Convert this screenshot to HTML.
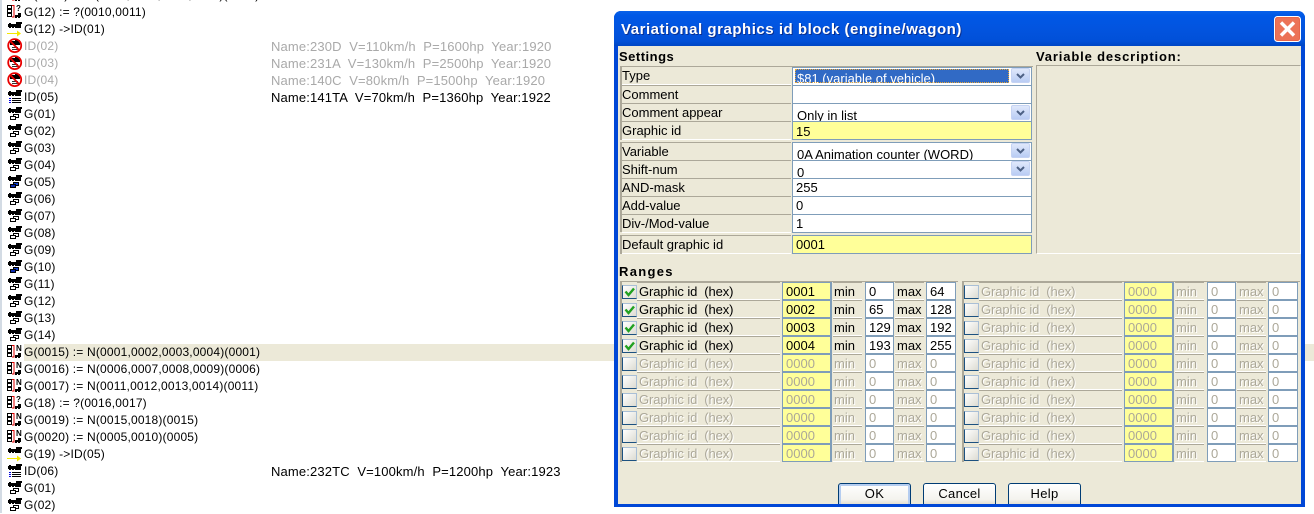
<!DOCTYPE html>
<html><head><meta charset="utf-8"><style>
*{box-sizing:border-box}
html,body{margin:0;padding:0;background:#fff;width:1314px;height:513px;overflow:hidden;font:13px/17px "Liberation Sans",Arial,sans-serif;color:#000}
#bar{position:absolute;left:0;top:0;width:2px;height:513px;background:#d3dbe4}
.r{position:absolute;left:0;width:1314px;height:17px;white-space:pre;font-size:12px}
.r svg{position:absolute;left:6px;top:0;width:16px;height:16px;overflow:visible}
.r b{position:absolute;left:24px;top:0;font-weight:normal;letter-spacing:.18px}
.r i{position:absolute;left:271px;top:0;font-style:normal;font-size:13px;letter-spacing:.15px}
.r u{position:absolute;left:16px;top:0;font:bold 8px/8px "Liberation Sans",sans-serif;text-decoration:none}
.g{color:#a9a9a9}
.s{position:absolute;left:24px;top:344px;width:1290px;height:17px;background:#ece9d8}
#dlg{position:absolute;left:614px;top:11px;width:691px;height:496px;background:#0047d6;border-radius:7px 7px 0 0;overflow:hidden}
#tb{position:absolute;left:0;top:0;width:691px;height:35px;background:linear-gradient(#0a62ea 0,#0058e6 4px,#0254df 18px,#0150d8 30px,#0046c4 35px)}
#tt{position:absolute;left:7px;top:9px;font:bold 15px/20px "Liberation Sans",sans-serif;color:#fff;text-shadow:1px 1px #0a2f90;white-space:pre;letter-spacing:.53px}
#cl{position:absolute;left:660px;top:5px;width:27px;height:26px}
#cl svg{display:block}
#cb{position:absolute;left:4px;top:35px;width:683px;height:458px;background:#ece9d8;overflow:hidden}
.a{position:absolute;white-space:pre}
.h{font:bold 13px/18px "Liberation Sans",sans-serif;letter-spacing:.5px}
.fr{background:#aca899}
.l{position:absolute;background:#ece9d8;border-bottom:1px solid #fff;border-top:1px solid #aca899;padding-left:0;height:19px;line-height:18px;left:622px;width:169px;white-space:pre}
.f{position:absolute;background:#fff;border:1px solid #7f9db9;height:19px;left:792px;width:240px;padding-left:3px;line-height:17px;overflow:hidden;white-space:pre}
.y{background:#ffff99}
.cmb{line-height:23px;padding-left:4px}
.dd{position:absolute;left:1011px;width:19px;height:15px;background:linear-gradient(#dfe8fb,#b9ccf4);border:1px solid #c5d3f3;border-radius:2px}
.dd svg{display:block}
.rr{position:absolute;width:336px;height:18px;white-space:pre}
.rr>div{position:absolute;top:0;height:18px;line-height:18px;overflow:hidden}
.rr .cb{left:2px;top:3px;width:15px;height:14px;background:linear-gradient(135deg,#fff,#dcdbd2);border:1px solid #a9bfd6;border-left:1px solid #1c5180;border-bottom:1px solid #1c5180}
.rr .c{background:#ece9d8;border-top:1px solid #aca899;border-bottom:1px solid #fff;height:18px}
.rr .t{left:17px;width:143px;padding-left:2px;letter-spacing:-.1px}
.rr .m{left:213px;width:29px;padding-left:1px}
.rr .x{left:275px;width:29px;padding-left:2px}
.rr .n{background:#fff;border:1px solid #7f9db9;padding-left:3px}
.rr .v{left:162px;width:50px;background:#ffff99;border:1px solid #7f9db9;padding-left:3px;border-width:1px 2px 1px 1px}
.rr .i1{left:245px;width:29px}
.rr .i2{left:306px;width:30px}
.d .c{color:#aca899;text-shadow:1px 1px #fff}
.d .v,.d .n{color:#aca899}
.btn{position:absolute;height:24px;width:73px;border:1px solid #003c74;border-radius:3px;background:linear-gradient(#fff,#f4f3ee 70%,#dcd8c8);text-align:center;line-height:19px;top:483px;z-index:2;letter-spacing:.3px}
.ok{box-shadow:inset 0 0 0 2px #b5cdf0}
</style></head><body>
<svg width="0" height="0" style="position:absolute"><defs>
<g id="lo" shape-rendering="crispEdges"><rect x="2" y="3" width="13" height="3"/><rect x="10" y="1" width="6" height="2"/><rect x="3" y="2" width="2" height="1"/><rect x="11" y="3" width="4" height="4"/><rect x="3" y="6" width="2" height="1"/><rect x="6" y="6" width="2" height="1"/><rect x="9" y="6" width="2" height="1"/></g>
<g id="bx" shape-rendering="crispEdges" fill="#fff" stroke="#000"><rect x="7.5" y="8.5" width="5" height="3"/><rect x="4.5" y="10.5" width="5" height="3"/></g>
<g id="bb" shape-rendering="crispEdges" fill="#1040d0" stroke="#000"><rect x="7.5" y="8.5" width="5" height="3"/><rect x="4.5" y="10.5" width="5" height="3" fill="#0a2ab0"/></g>
<g id="li" shape-rendering="crispEdges"><rect x="3" y="9" width="2" height="1" fill="#0000e0"/><rect x="3" y="11" width="2" height="1" fill="#0000e0"/><rect x="3" y="13" width="2" height="1" fill="#0000e0"/><rect x="6" y="9" width="9" height="1"/><rect x="6" y="11" width="9" height="1"/><rect x="6" y="13" width="9" height="1"/></g>
<g id="no" fill="none" stroke="#e80000" stroke-width="1.8"><circle cx="8.7" cy="7.6" r="6.5"/><path d="M4.2 3L13.2 12.2"/></g>
<g id="fb" shape-rendering="crispEdges"><rect x="4" y="3" width="10" height="4"/><rect x="9" y="2" width="5" height="1"/><rect x="6" y="9" width="6" height="1" fill="#333"/><rect x="6" y="11" width="6" height="1" fill="#333"/></g>
<g id="mu" shape-rendering="crispEdges"><g fill="#fff" stroke="#000"><rect x="1.5" y="1.5" width="4" height="3"/><rect x="1.5" y="5.5" width="4" height="3"/><rect x="1.5" y="9.5" width="4" height="3"/></g><path d="M6 1.5h2v11.5H6" fill="none" stroke="#e00000"/><rect x="9" y="11" width="6" height="2"/><rect x="12" y="9" width="3" height="2"/><rect x="9" y="13" width="2" height="1"/><rect x="12" y="13" width="2" height="1"/></g>
</defs></svg>
<div id="bar"></div><div class="s"></div>
<div class="r" style="top:-13px"><svg><use href="#mu"/></svg><u style="top:2px">N</u><b>G(0011) := N(0006,0007,0008,0009)(0006)</b></div>
<div class="r" style="top:4px"><svg><use href="#mu"/></svg><u style="top:1px">?</u><b>G(12) := ?(0010,0011)</b></div>
<div class="r" style="top:21px"><svg><use href="#lo"/><path d="M1 12.5h11" stroke="#f4e800" shape-rendering="crispEdges"/><path d="M11 9.5l4 3-4 3z" fill="#f4e800"/></svg><b>G(12) -&gt;ID(01)</b></div>
<div class="r" style="top:38px"><svg><use href="#fb"/><use href="#no"/></svg><b class="g">ID(02)</b><i class="g">Name:230D  V=110km/h  P=1600hp  Year:1920</i></div>
<div class="r" style="top:55px"><svg><use href="#fb"/><use href="#no"/></svg><b class="g">ID(03)</b><i class="g">Name:231A  V=130km/h  P=2500hp  Year:1920</i></div>
<div class="r" style="top:72px"><svg><use href="#fb"/><use href="#no"/></svg><b class="g">ID(04)</b><i class="g">Name:140C  V=80km/h  P=1500hp  Year:1920</i></div>
<div class="r" style="top:89px"><svg><use href="#lo"/><use href="#li"/></svg><b>ID(05)</b><i>Name:141TA  V=70km/h  P=1360hp  Year:1922</i></div>
<div class="r" style="top:106px"><svg><use href="#lo"/><use href="#bx"/></svg><b>G(01)</b></div>
<div class="r" style="top:123px"><svg><use href="#lo"/><use href="#bx"/></svg><b>G(02)</b></div>
<div class="r" style="top:140px"><svg><use href="#lo"/><use href="#bx"/></svg><b>G(03)</b></div>
<div class="r" style="top:157px"><svg><use href="#lo"/><use href="#bx"/></svg><b>G(04)</b></div>
<div class="r" style="top:174px"><svg><use href="#lo"/><use href="#bb"/></svg><b>G(05)</b></div>
<div class="r" style="top:191px"><svg><use href="#lo"/><use href="#bx"/></svg><b>G(06)</b></div>
<div class="r" style="top:208px"><svg><use href="#lo"/><use href="#bx"/></svg><b>G(07)</b></div>
<div class="r" style="top:225px"><svg><use href="#lo"/><use href="#bx"/></svg><b>G(08)</b></div>
<div class="r" style="top:242px"><svg><use href="#lo"/><use href="#bx"/></svg><b>G(09)</b></div>
<div class="r" style="top:259px"><svg><use href="#lo"/><use href="#bb"/></svg><b>G(10)</b></div>
<div class="r" style="top:276px"><svg><use href="#lo"/><use href="#bx"/></svg><b>G(11)</b></div>
<div class="r" style="top:293px"><svg><use href="#lo"/><use href="#bx"/></svg><b>G(12)</b></div>
<div class="r" style="top:310px"><svg><use href="#lo"/><use href="#bx"/></svg><b>G(13)</b></div>
<div class="r" style="top:327px"><svg><use href="#lo"/><use href="#bx"/></svg><b>G(14)</b></div>
<div class="r" style="top:344px"><svg><use href="#mu"/></svg><u style="top:1px">N</u><b>G(0015) := N(0001,0002,0003,0004)(0001)</b></div>
<div class="r" style="top:361px"><svg><use href="#mu"/></svg><u style="top:1px">N</u><b>G(0016) := N(0006,0007,0008,0009)(0006)</b></div>
<div class="r" style="top:378px"><svg><use href="#mu"/></svg><u style="top:1px">N</u><b>G(0017) := N(0011,0012,0013,0014)(0011)</b></div>
<div class="r" style="top:395px"><svg><use href="#mu"/></svg><u style="top:1px">?</u><b>G(18) := ?(0016,0017)</b></div>
<div class="r" style="top:412px"><svg><use href="#mu"/></svg><u style="top:1px">N</u><b>G(0019) := N(0015,0018)(0015)</b></div>
<div class="r" style="top:429px"><svg><use href="#mu"/></svg><u style="top:1px">N</u><b>G(0020) := N(0005,0010)(0005)</b></div>
<div class="r" style="top:446px"><svg><use href="#lo"/><path d="M1 12.5h11" stroke="#f4e800" shape-rendering="crispEdges"/><path d="M11 9.5l4 3-4 3z" fill="#f4e800"/></svg><b>G(19) -&gt;ID(05)</b></div>
<div class="r" style="top:463px"><svg><use href="#lo"/><use href="#li"/></svg><b>ID(06)</b><i>Name:232TC  V=100km/h  P=1200hp  Year:1923</i></div>
<div class="r" style="top:480px"><svg><use href="#lo"/><use href="#bx"/></svg><b>G(01)</b></div>
<div class="r" style="top:497px"><svg><use href="#lo"/><use href="#bx"/></svg><b>G(02)</b></div>

<div id="dlg"><div id="tb"></div><div id="tt">Variational graphics id block (engine/wagon)</div>
<div id="cl"><svg width="27" height="26"><rect x=".5" y=".5" width="26" height="25" rx="3" fill="#e8664a" stroke="#fff"/><rect x="2" y="2" width="23" height="22" rx="2" fill="#ec7357"/><path d="M7 6.5L20 19.5M20 6.5L7 19.5" stroke="#fff" stroke-width="3.4"/></svg></div>
<div id="cb"></div></div>

<div class="a h" style="left:619px;top:48px;letter-spacing:.5px">Settings</div>
<div class="a h" style="left:1036px;top:48px;letter-spacing:.85px">Variable description:</div>
<div class="a" style="left:1036px;top:65px;width:265px;height:189px;border-top:1px solid #aca899;border-left:1px solid #aca899;border-right:1px solid #fff;border-bottom:1px solid #fff"></div>
<div class="a fr" style="left:620px;top:66px;width:413px;height:1px"></div>
<div class="a fr" style="left:620px;top:66px;width:2px;height:74px"></div>
<div class="a fr" style="left:620px;top:142px;width:2px;height:90px"></div>
<div class="a fr" style="left:620px;top:235px;width:2px;height:19px"></div>

<div class="l" style="top:66px">Type</div>
<div class="f" style="top:67px"></div>
<div class="a" style="left:795px;top:69px;width:214px;height:14px;background:#316ac5;outline:1px dotted #e8a838;outline-offset:-1px;color:#fff;overflow:hidden;padding-left:2px;line-height:19px">$81 (variable of vehicle)</div>
<div class="dd" style="top:68px"><svg width="17" height="13"><path d="M5 5l3.5 3.5L12 5" fill="none" stroke="#4d6185" stroke-width="2"/></svg></div>
<div class="l" style="top:85px">Comment</div><div class="f" style="top:85px"></div>
<div class="l" style="top:103px">Comment appear</div><div class="f cmb" style="top:103px">Only in list</div>
<div class="dd" style="top:105px"><svg width="17" height="13"><path d="M5 5l3.5 3.5L12 5" fill="none" stroke="#4d6185" stroke-width="2"/></svg></div>
<div class="l" style="top:121px">Graphic id</div><div class="f y" style="top:121px;line-height:19px">15</div>

<div class="l" style="top:142px">Variable</div><div class="f cmb" style="top:142px">0A Animation counter (WORD)</div>
<div class="dd" style="top:143px"><svg width="17" height="13"><path d="M5 5l3.5 3.5L12 5" fill="none" stroke="#4d6185" stroke-width="2"/></svg></div>
<div class="l" style="top:160px">Shift-num</div><div class="f cmb" style="top:160px">0</div>
<div class="dd" style="top:161px"><svg width="17" height="13"><path d="M5 5l3.5 3.5L12 5" fill="none" stroke="#4d6185" stroke-width="2"/></svg></div>
<div class="l" style="top:178px">AND-mask</div><div class="f" style="top:178px">255</div>
<div class="l" style="top:196px">Add-value</div><div class="f" style="top:196px">0</div>
<div class="l" style="top:214px">Div-/Mod-value</div><div class="f" style="top:214px">1</div>
<div class="l" style="top:235px">Default graphic id</div><div class="f y" style="top:235px;height:19px">0001</div>

<div class="a h" style="left:619px;top:263px;letter-spacing:1.3px">Ranges</div>
<div class="a fr" style="left:620px;top:281px;width:338px;height:1px"></div>
<div class="a fr" style="left:620px;top:281px;width:2px;height:181px"></div>
<div class="a fr" style="left:962px;top:281px;width:338px;height:1px"></div>
<div class="a fr" style="left:962px;top:281px;width:2px;height:181px"></div>

<div class="rr" style="left:620px;top:282px"><div class="cb"><svg width="13" height="12" style="display:block"><path d="M2.5 5.5L5.5 9L11 2.5" fill="none" stroke="#21a121" stroke-width="2.4"/></svg></div><div class="c t">Graphic id  (hex)</div><div class="v">0001</div><div class="c m">min</div><div class="n i1">0</div><div class="c x">max</div><div class="n i2">64</div></div>
<div class="rr" style="left:620px;top:300px"><div class="cb"><svg width="13" height="12" style="display:block"><path d="M2.5 5.5L5.5 9L11 2.5" fill="none" stroke="#21a121" stroke-width="2.4"/></svg></div><div class="c t">Graphic id  (hex)</div><div class="v">0002</div><div class="c m">min</div><div class="n i1">65</div><div class="c x">max</div><div class="n i2">128</div></div>
<div class="rr" style="left:620px;top:318px"><div class="cb"><svg width="13" height="12" style="display:block"><path d="M2.5 5.5L5.5 9L11 2.5" fill="none" stroke="#21a121" stroke-width="2.4"/></svg></div><div class="c t">Graphic id  (hex)</div><div class="v">0003</div><div class="c m">min</div><div class="n i1">129</div><div class="c x">max</div><div class="n i2">192</div></div>
<div class="rr" style="left:620px;top:336px"><div class="cb"><svg width="13" height="12" style="display:block"><path d="M2.5 5.5L5.5 9L11 2.5" fill="none" stroke="#21a121" stroke-width="2.4"/></svg></div><div class="c t">Graphic id  (hex)</div><div class="v">0004</div><div class="c m">min</div><div class="n i1">193</div><div class="c x">max</div><div class="n i2">255</div></div>
<div class="rr d" style="left:620px;top:354px"><div class="cb"></div><div class="c t">Graphic id  (hex)</div><div class="v">0000</div><div class="c m">min</div><div class="n i1">0</div><div class="c x">max</div><div class="n i2">0</div></div>
<div class="rr d" style="left:620px;top:372px"><div class="cb"></div><div class="c t">Graphic id  (hex)</div><div class="v">0000</div><div class="c m">min</div><div class="n i1">0</div><div class="c x">max</div><div class="n i2">0</div></div>
<div class="rr d" style="left:620px;top:390px"><div class="cb"></div><div class="c t">Graphic id  (hex)</div><div class="v">0000</div><div class="c m">min</div><div class="n i1">0</div><div class="c x">max</div><div class="n i2">0</div></div>
<div class="rr d" style="left:620px;top:408px"><div class="cb"></div><div class="c t">Graphic id  (hex)</div><div class="v">0000</div><div class="c m">min</div><div class="n i1">0</div><div class="c x">max</div><div class="n i2">0</div></div>
<div class="rr d" style="left:620px;top:426px"><div class="cb"></div><div class="c t">Graphic id  (hex)</div><div class="v">0000</div><div class="c m">min</div><div class="n i1">0</div><div class="c x">max</div><div class="n i2">0</div></div>
<div class="rr d" style="left:620px;top:444px"><div class="cb"></div><div class="c t">Graphic id  (hex)</div><div class="v">0000</div><div class="c m">min</div><div class="n i1">0</div><div class="c x">max</div><div class="n i2">0</div></div>

<div class="rr d" style="left:962px;top:282px"><div class="cb"></div><div class="c t">Graphic id  (hex)</div><div class="v">0000</div><div class="c m">min</div><div class="n i1">0</div><div class="c x">max</div><div class="n i2">0</div></div>
<div class="rr d" style="left:962px;top:300px"><div class="cb"></div><div class="c t">Graphic id  (hex)</div><div class="v">0000</div><div class="c m">min</div><div class="n i1">0</div><div class="c x">max</div><div class="n i2">0</div></div>
<div class="rr d" style="left:962px;top:318px"><div class="cb"></div><div class="c t">Graphic id  (hex)</div><div class="v">0000</div><div class="c m">min</div><div class="n i1">0</div><div class="c x">max</div><div class="n i2">0</div></div>
<div class="rr d" style="left:962px;top:336px"><div class="cb"></div><div class="c t">Graphic id  (hex)</div><div class="v">0000</div><div class="c m">min</div><div class="n i1">0</div><div class="c x">max</div><div class="n i2">0</div></div>
<div class="rr d" style="left:962px;top:354px"><div class="cb"></div><div class="c t">Graphic id  (hex)</div><div class="v">0000</div><div class="c m">min</div><div class="n i1">0</div><div class="c x">max</div><div class="n i2">0</div></div>
<div class="rr d" style="left:962px;top:372px"><div class="cb"></div><div class="c t">Graphic id  (hex)</div><div class="v">0000</div><div class="c m">min</div><div class="n i1">0</div><div class="c x">max</div><div class="n i2">0</div></div>
<div class="rr d" style="left:962px;top:390px"><div class="cb"></div><div class="c t">Graphic id  (hex)</div><div class="v">0000</div><div class="c m">min</div><div class="n i1">0</div><div class="c x">max</div><div class="n i2">0</div></div>
<div class="rr d" style="left:962px;top:408px"><div class="cb"></div><div class="c t">Graphic id  (hex)</div><div class="v">0000</div><div class="c m">min</div><div class="n i1">0</div><div class="c x">max</div><div class="n i2">0</div></div>
<div class="rr d" style="left:962px;top:426px"><div class="cb"></div><div class="c t">Graphic id  (hex)</div><div class="v">0000</div><div class="c m">min</div><div class="n i1">0</div><div class="c x">max</div><div class="n i2">0</div></div>
<div class="rr d" style="left:962px;top:444px"><div class="cb"></div><div class="c t">Graphic id  (hex)</div><div class="v">0000</div><div class="c m">min</div><div class="n i1">0</div><div class="c x">max</div><div class="n i2">0</div></div>

<div class="btn ok" style="left:838px">OK</div>
<div class="btn" style="left:923px">Cancel</div>
<div class="btn" style="left:1008px">Help</div>
<div class="a" style="left:614px;top:504px;width:691px;height:3px;background:#0047d6;z-index:3"></div>
</body></html>
